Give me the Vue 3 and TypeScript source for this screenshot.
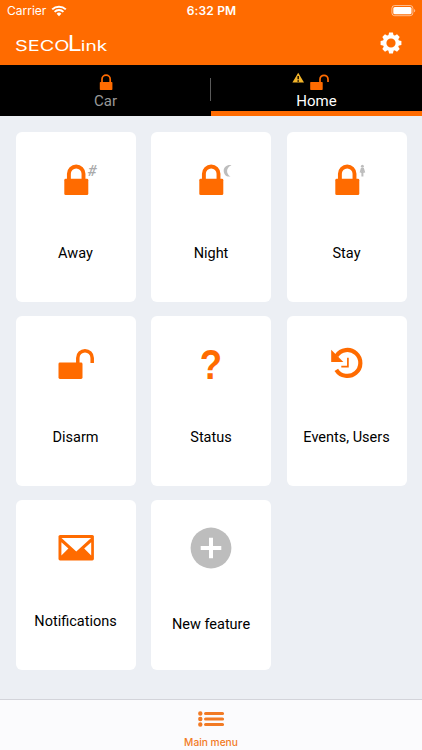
<script setup lang="ts">
type IconName = 'away' | 'night' | 'stay' | 'disarm' | 'status' | 'events' | 'mail' | 'add'

interface Feature {
  icon: IconName
  label: string
}

const features: Feature[] = [
  { icon: 'away', label: 'Away' },
  { icon: 'night', label: 'Night' },
  { icon: 'stay', label: 'Stay' },
  { icon: 'disarm', label: 'Disarm' },
  { icon: 'status', label: 'Status' },
  { icon: 'events', label: 'Events, Users' },
  { icon: 'mail', label: 'Notifications' },
  { icon: 'add', label: 'New feature' },
]

const lockedIcons: IconName[] = ['away', 'night', 'stay']
const gearAngles: number[] = [0, 45, 90, 135, 180, 225, 270, 315]
</script>

<template>
  <div class="screen">
    <header class="header">
      <div class="status-bar">
        <div class="carrier">
          <span>Carrier</span>
          <svg class="wifi" width="16" height="12" viewBox="0 0 16 12">
            <path d="M1.2 4.4a9.8 9.8 0 0 1 13.6 0M3.6 6.9a6.3 6.3 0 0 1 8.8 0" fill="none" stroke="#fff" stroke-width="2" />
            <path d="M5.6 8.7a3.5 3.5 0 0 1 4.8 0L8 11.2z" fill="#fff" />
          </svg>
        </div>
        <span class="time">6:32 PM</span>
        <svg class="battery" width="25" height="12" viewBox="0 0 25 12">
          <rect x=".9" y=".5" width="21" height="10.2" rx="2.8" fill="none" stroke="#fff" stroke-opacity=".55" />
          <rect x="2.3" y="1.9" width="18.2" height="7.4" rx="1.5" fill="#fff" />
          <path d="M23.1 3.9c1.5.6 1.5 2.8 0 3.4z" fill="#fff" fill-opacity=".6" />
        </svg>
      </div>
      <div class="title-bar">
        <svg class="logo" width="94" height="20" viewBox="0 0 94 20" fill="#fff">
          <text class="logo-text" x="0" y="18" font-size="14.3" textLength="54.5" lengthAdjust="spacingAndGlyphs">SECO</text>
          <text class="logo-text" x="52.8" y="18" font-size="21.8" textLength="14" lengthAdjust="spacingAndGlyphs">L</text>
          <text class="logo-text" x="65.8" y="18" font-size="14" textLength="26.5" lengthAdjust="spacingAndGlyphs">ink</text>
        </svg>
        <svg class="gear" width="22" height="22" viewBox="-11 -11 22 22">
          <circle r="6.4" fill="none" stroke="#fff" stroke-width="3.6" />
          <path
            v-for="angle in gearAngles"
            :key="angle"
            d="M-2.7-7.2L-1.9-10.4H1.9L2.7-7.2z"
            fill="#fff"
            :transform="`rotate(${angle})`"
          />
        </svg>
      </div>
    </header>

    <nav class="tabs">
      <div class="tab">
        <svg class="tab-icon" width="40" height="17" viewBox="0 0 40 17">
          <path d="M16 9V5.3a4.1 4.1 0 0 1 8.2 0V9" fill="none" stroke="#ff6b00" stroke-width="1.7" />
          <rect x="13.8" y="8" width="12.6" height="8" rx=".7" fill="#ff6b00" />
        </svg>
        <span>Car</span>
      </div>
      <div class="divider"></div>
      <div class="tab active">
        <svg class="tab-icon" width="40" height="17" viewBox="0 0 40 17">
          <path d="M1.9-.8L7.7 9H-3.9z" transform="translate(-.7 -.5)" fill="#f3b52b" />
          <path d="M1.2 1.9V5.2M1.2 6.3V7.7" stroke="#221500" stroke-width="1.6" />
          <path d="M23 9V5.3a4 4 0 0 1 8 0V8" fill="none" stroke="#ff6b00" stroke-width="1.7" />
          <rect x="13.2" y="8" width="12.5" height="8" rx=".7" fill="#ff6b00" />
        </svg>
        <span>Home</span>
      </div>
    </nav>

    <main class="grid">
      <section v-for="feature in features" :key="feature.icon" class="card" :class="feature.icon">
        <svg class="card-icon" width="120" height="90" viewBox="0 0 120 90" fill="#ff6b00">
          <template v-if="lockedIcons.includes(feature.icon)">
            <path d="M52.9 49V41.8a7.3 7.3 0 0 1 14.6 0V49" fill="none" stroke="#ff6b00" stroke-width="3.9" />
            <rect x="48.3" y="46.8" width="24" height="16.3" rx="1.4" />
          </template>
          <text v-if="feature.icon === 'away'" class="hash" x="71.5" y="44.3">#</text>
          <path v-else-if="feature.icon === 'night'" d="M80.5 33.2c-4.7-.7-7.8 2-7.8 5.6 0 4 3.2 6.6 6.8 5.6-4.5-2.3-4.9-8.7 1-11.2z" fill="#bdbdbd" />
          <g v-else-if="feature.icon === 'stay'" fill="#bdbdbd">
            <circle cx="75.4" cy="34.2" r="1.5" />
            <path d="M73.9 36h3l1.3 4.5-1 .3-.7-2 .5 2.3h-.6v3.5h-2v-3.5h-.6l.5-2.3-.7 2-1-.3z" />
          </g>
          <template v-else-if="feature.icon === 'disarm'">
            <path d="M61.8 48V41.9a7.2 7.2 0 0 1 14.4 0V47" fill="none" stroke="#ff6b00" stroke-width="3.5" />
            <rect x="42.5" y="46.5" width="24" height="16.5" rx="1.4" />
          </template>
          <text v-else-if="feature.icon === 'status'" class="question" x="48.8" y="62.7" textLength="22.4" lengthAdjust="spacingAndGlyphs">?</text>
          <template v-else-if="feature.icon === 'events'">
            <path d="M49.5 39.8A13 13 0 1 1 49.3 53.8" fill="none" stroke="#ff6b00" stroke-width="4.2" />
            <path d="M44.2 33.8V46.1H56.4z" />
            <path d="M60.9 41.8V50.7H54.3" fill="none" stroke="#ff6b00" stroke-width="1.7" />
          </template>
          <template v-else-if="feature.icon === 'mail'">
            <rect x="42.5" y="35" width="35.4" height="25.4" rx="1.6" />
            <path d="M45.5 38H75.1L60.3 51.5zM45.4 42.2L52.4 48.6L45.4 55.6zM75.2 42.2L68.2 48.6L75.2 55.6z" fill="#fff" />
          </template>
          <template v-else-if="feature.icon === 'add'">
            <circle cx="60" cy="48" r="20.4" fill="#bdbdbd" />
            <path d="M60 37.7V58.3M49.7 48H70.3" stroke="#fff" stroke-width="4" />
          </template>
        </svg>
        <span class="label">{{ feature.label }}</span>
      </section>
    </main>

    <footer class="footer">
      <svg class="menu-icon" width="27" height="16" viewBox="0 0 27 16" stroke="#f27a24" stroke-linecap="round">
        <path d="M2.3 2.5h.01M2.3 8h.01M2.3 13.5h.01" stroke-width="4.4" />
        <path d="M7.6 2.5H24.5M7.6 8H24.5M7.6 13.5H24.5" stroke-width="3.2" />
      </svg>
      <span>Main menu</span>
    </footer>
  </div>
</template>

<style>
body {
  margin: 0;
}
</style>

<style scoped>
.screen {
  display: flex;
  flex-direction: column;
  width: 422px;
  height: 750px;
  overflow: hidden;
  background: #eceff4;
  font-family: Roboto, sans-serif;
}
.header {
  box-sizing: border-box;
  height: 65px;
  flex: none;
  background: #ff6b00;
  color: #fff;
}
.status-bar {
  display: grid;
  grid-template-columns: 1fr auto 1fr;
  align-items: center;
  height: 22px;
  padding: 0 6px 0 7px;
  font-family: Inter, sans-serif;
  font-size: 12px;
  line-height: 22px;
}
.carrier {
  display: flex;
  align-items: center;
  gap: 5px;
}
.time {
  font-weight: 600;
  letter-spacing: 0.15px;
}
.battery {
  justify-self: end;
}
.title-bar {
  display: flex;
  align-items: center;
  justify-content: space-between;
  height: 42px;
  padding: 0 20px 0 15px;
}
.logo {
  overflow: visible;
}
.logo-text {
  font-family: Inter, sans-serif;
  font-weight: 400;
}
.tabs {
  display: grid;
  grid-template-columns: 210px 1px 211px;
  height: 51px;
  flex: none;
  background: #000;
}
.tab {
  box-sizing: border-box;
  display: flex;
  flex-direction: column;
  align-items: center;
  padding-top: 9px;
  padding-left: 1px;
  color: #999;
  font-size: 15px;
  line-height: 20px;
}
.tab.active {
  padding-left: 0;
  border-bottom: 5px solid #ff6b00;
  color: #fff;
}
.tab-icon {
  flex: none;
  overflow: visible;
}
.divider {
  height: 23px;
  margin-top: 13px;
  background: #5a5a5a;
}
.grid {
  display: grid;
  grid-template-columns: repeat(3, 120px);
  grid-auto-rows: 170px;
  gap: 14.3px 15.5px;
  flex: 1;
  align-content: start;
  padding: 15.7px 15.5px 0;
}
.card {
  display: flex;
  flex-direction: column;
  align-items: center;
  border-radius: 6px;
  background: #fff;
}
.card-icon {
  flex: none;
}
.hash {
  font-size: 15.5px;
  font-weight: 500;
  font-style: italic;
  fill: #aaa;
}
.question {
  font-family: "Liberation Sans", sans-serif;
  font-size: 42.5px;
  font-weight: 700;
}
.label {
  margin-top: 23px;
  color: #000;
  font-size: 14.5px;
  line-height: 18px;
  white-space: nowrap;
}
.add .label {
  margin-top: 26px;
}
.footer {
  box-sizing: border-box;
  display: flex;
  flex-direction: column;
  align-items: center;
  height: 51px;
  flex: none;
  padding-top: 11px;
  border-top: 1px solid #d3d4da;
  background: #fbfbfd;
  color: #f27a24;
  font-family: Inter, sans-serif;
  font-size: 10.2px;
  font-weight: 500;
  line-height: 14px;
}
.footer span {
  margin-top: 8px;
}
.menu-icon {
  flex: none;
}
</style>
